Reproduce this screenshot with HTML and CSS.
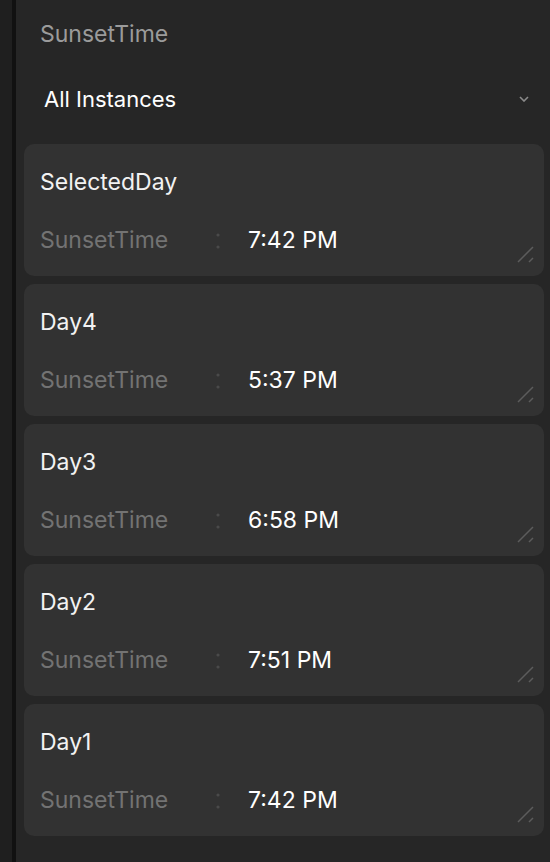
FILE: index.html
```html
<!DOCTYPE html>
<html lang="en">
<head>
  <meta charset="UTF-8">
  <title>SunsetTime</title>
  <link rel="stylesheet" href="styles.css">
</head>
<body>
  <div class="shell">
    <div class="gutter"></div>
    <div class="panel">
      <div class="panel-title">SunsetTime</div>

      <div class="picker">
        <span>All Instances</span>
        <svg class="chevron" width="10" height="6" viewBox="0 0 10 6">
          <path d="M1 1 L5 5 L9 1" fill="none" stroke="#8a8a8a" stroke-width="1.6"/>
        </svg>
      </div>

      <div class="card">
        <div class="card-title">SelectedDay</div>
        <div class="field">
          <span class="field-name">SunsetTime</span>
          <svg class="sep" width="4" height="16" viewBox="0 0 4 16"><circle cx="2" cy="2" r="1.6"/><circle cx="2" cy="14" r="1.6"/></svg>
          <span class="field-value">7:42 PM</span>
        </div>
        <svg class="grip" width="17" height="17" viewBox="0 0 17 17">
          <path d="M1 16 L16 1 M12 16 L16 12" stroke="#5c5c5c" stroke-width="1.5"/>
        </svg>
      </div>

      <div class="card">
        <div class="card-title">Day4</div>
        <div class="field">
          <span class="field-name">SunsetTime</span>
          <svg class="sep" width="4" height="16" viewBox="0 0 4 16"><circle cx="2" cy="2" r="1.6"/><circle cx="2" cy="14" r="1.6"/></svg>
          <span class="field-value">5:37 PM</span>
        </div>
        <svg class="grip" width="17" height="17" viewBox="0 0 17 17">
          <path d="M1 16 L16 1 M12 16 L16 12" stroke="#5c5c5c" stroke-width="1.5"/>
        </svg>
      </div>

      <div class="card">
        <div class="card-title">Day3</div>
        <div class="field">
          <span class="field-name">SunsetTime</span>
          <svg class="sep" width="4" height="16" viewBox="0 0 4 16"><circle cx="2" cy="2" r="1.6"/><circle cx="2" cy="14" r="1.6"/></svg>
          <span class="field-value">6:58 PM</span>
        </div>
        <svg class="grip" width="17" height="17" viewBox="0 0 17 17">
          <path d="M1 16 L16 1 M12 16 L16 12" stroke="#5c5c5c" stroke-width="1.5"/>
        </svg>
      </div>

      <div class="card">
        <div class="card-title">Day2</div>
        <div class="field">
          <span class="field-name">SunsetTime</span>
          <svg class="sep" width="4" height="16" viewBox="0 0 4 16"><circle cx="2" cy="2" r="1.6"/><circle cx="2" cy="14" r="1.6"/></svg>
          <span class="field-value">7:51 PM</span>
        </div>
        <svg class="grip" width="17" height="17" viewBox="0 0 17 17">
          <path d="M1 16 L16 1 M12 16 L16 12" stroke="#5c5c5c" stroke-width="1.5"/>
        </svg>
      </div>

      <div class="card">
        <div class="card-title">Day1</div>
        <div class="field">
          <span class="field-name">SunsetTime</span>
          <svg class="sep" width="4" height="16" viewBox="0 0 4 16"><circle cx="2" cy="2" r="1.6"/><circle cx="2" cy="14" r="1.6"/></svg>
          <span class="field-value">7:42 PM</span>
        </div>
        <svg class="grip" width="17" height="17" viewBox="0 0 17 17">
          <path d="M1 16 L16 1 M12 16 L16 12" stroke="#5c5c5c" stroke-width="1.5"/>
        </svg>
      </div>
    </div>
  </div>
</body>
</html>
```

FILE: styles.css
```css
html, body {
  margin: 0;
  height: 100%;
  background-color: #262626;
  font-family: Inter, "Noto Sans", sans-serif;
}

.shell {
  display: flex;
  min-height: 100%;
}

.gutter {
  width: 12px;
  background-color: #1f1f1f;
  border-right: 4px solid #111111;
  flex-shrink: 0;
}

.panel {
  flex: 1;
  padding: 0 6px 0 8px;
  display: flex;
  flex-direction: column;
  gap: 8px;
}

.panel-title {
  color: #9b9b9b;
  font-size: 23px;
  height: 34px;
  line-height: 34px;
  padding: 17px 0 0 16px;
}

.picker {
  display: flex;
  align-items: center;
  justify-content: space-between;
  height: 44px;
  padding: 0 15px 0 20px;
  margin: 18px 0 15px 0;
  color: #ffffff;
  font-size: 22px;
}

.card {
  position: relative;
  background-color: #323232;
  border-radius: 10px;
  height: 132px;
  padding: 0 16px;
  box-sizing: border-box;
}

.card-title {
  color: #f2f2f2;
  font-size: 23px;
  padding-top: 24px;
  line-height: 28px;
}

.field {
  display: flex;
  align-items: center;
  margin-top: 30px;
  line-height: 28px;
  font-size: 23px;
}

.field-name {
  color: #737373;
  width: 176px;
}

.sep {
  fill: #4a4a4a;
  margin: 1px 28px 0 0;
}

.field-value {
  color: #ffffff;
}

.grip {
  position: absolute;
  right: 10px;
  bottom: 13px;
}
```
